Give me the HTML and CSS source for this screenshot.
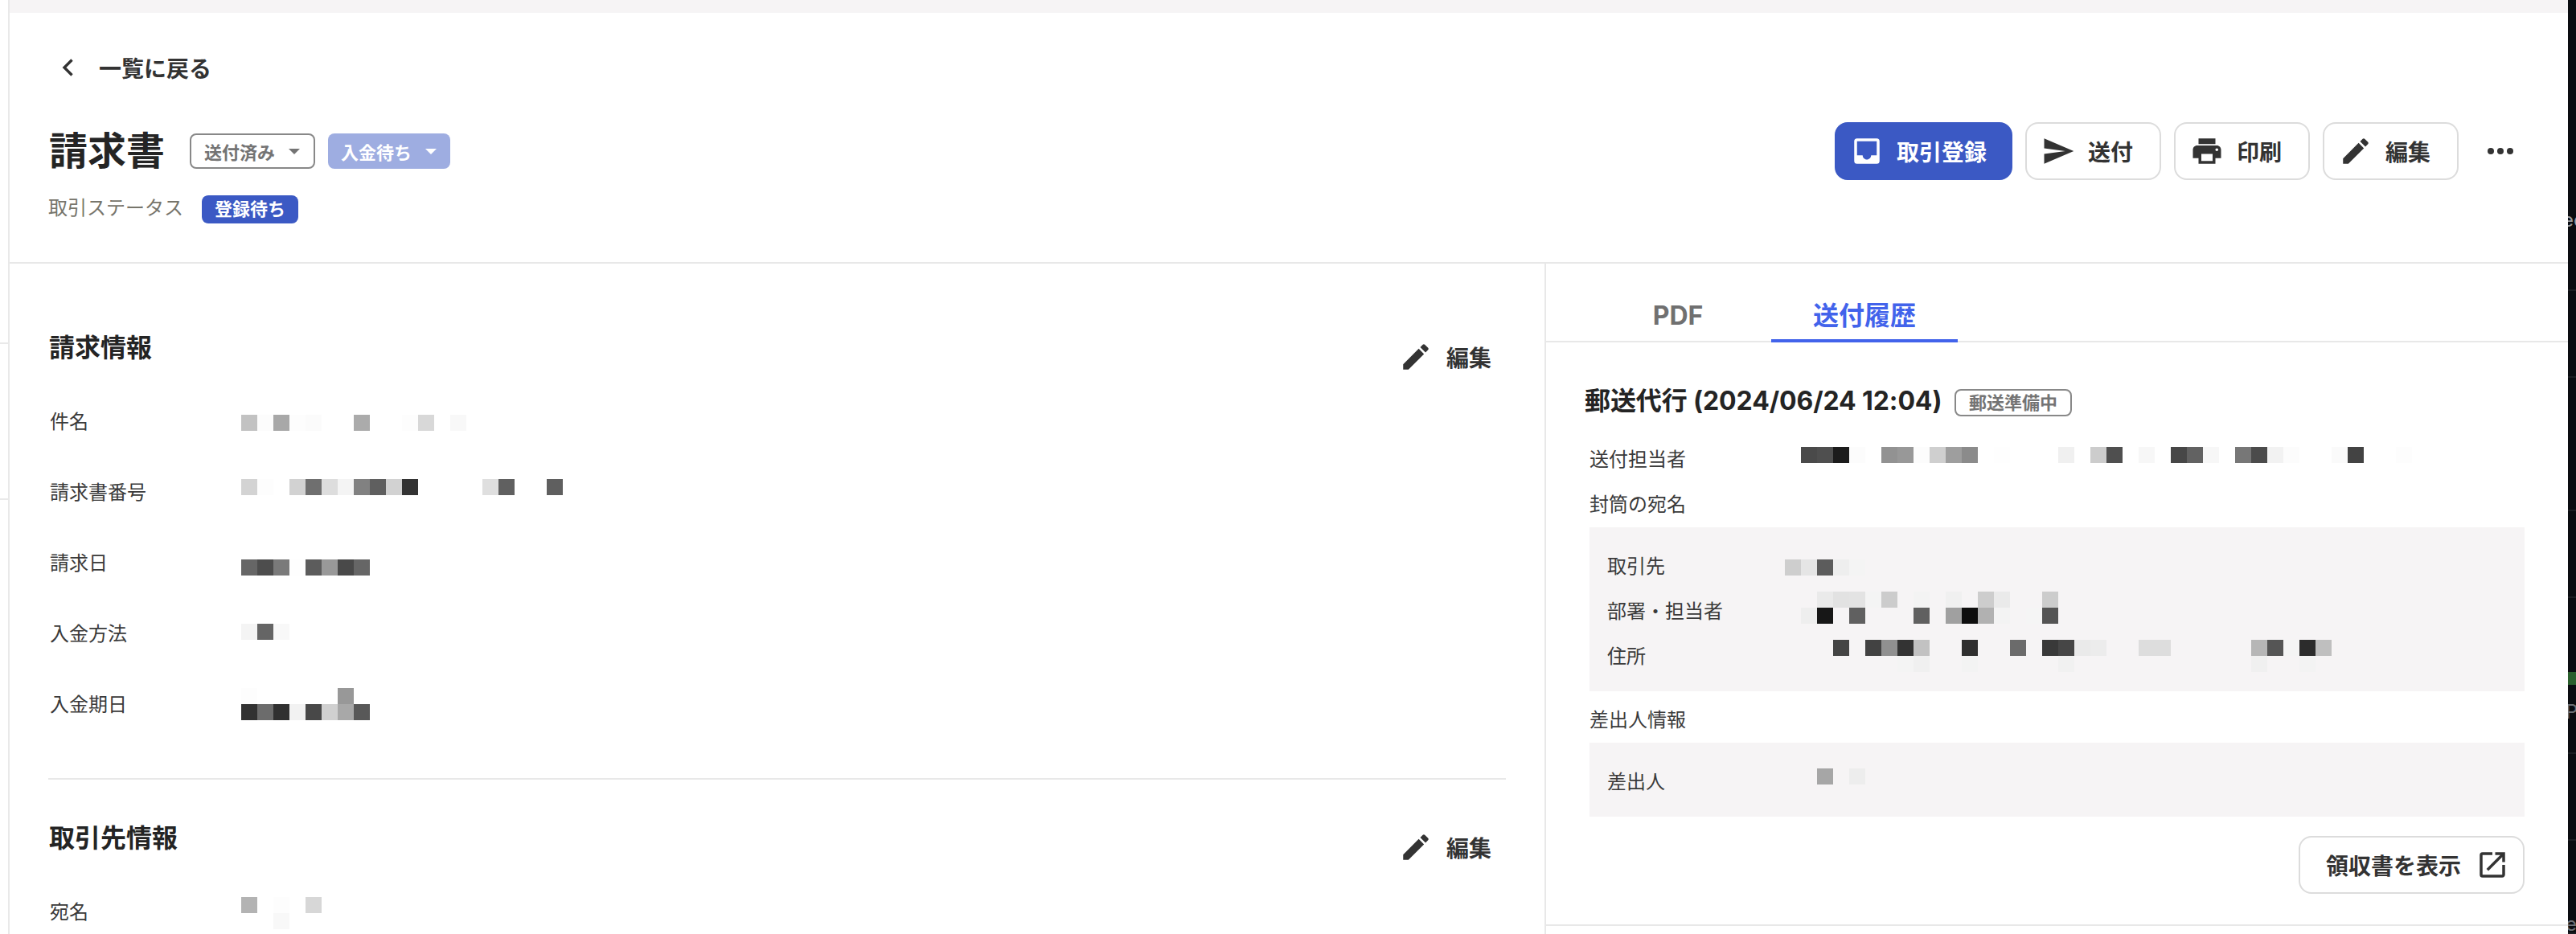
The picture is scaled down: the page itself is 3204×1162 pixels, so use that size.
FILE: index.html
```html
<!DOCTYPE html>
<html lang="ja">
<head>
  <meta charset="UTF-8">
  <meta name="viewport" content="width=device-width, initial-scale=1.0">
  <title>請求書</title>
  <link rel="stylesheet" href="styles.css">
</head>
<body>
  <svg width="0" height="0" class="defs">
    <symbol id="pencil" viewBox="0 0 24 24"><path d="M3 17.25V21h3.75L17.81 9.94l-3.75-3.75L3 17.25zM20.71 7.04a1 1 0 0 0 0-1.41l-2.34-2.34a1 1 0 0 0-1.41 0l-1.83 1.83 3.75 3.75 1.83-1.83z"/></symbol>
  </svg>

  <div class="screen">
    <div class="side">
      <div class="side-a"></div>
      <div class="side-b"></div>
    </div>

    <div class="app">
      <div class="topbar"></div>
      <header class="header">
        <a class="back">
          <svg width="16" height="22" viewBox="0 0 16 22"><path d="M13.500 1.500L4 11l9.500 9.500" fill="none" stroke="#333" stroke-width="3.400"/></svg>
          <span>一覧に戻る</span>
        </a>
        <div class="title-row">
          <h1>請求書</h1>
          <button class="chip chip-line">送付済み<i class="caret"></i></button>
          <button class="chip chip-fill">入金待ち<i class="caret"></i></button>
          <div class="actions">
            <button class="btn btn-primary">
              <svg class="icon" viewBox="0 0 24 24"><path d="M19 3H5a2 2 0 0 0-2 2v14a2 2 0 0 0 2 2h14a2 2 0 0 0 2-2V5a2 2 0 0 0-2-2zm0 12h-4c0 1.66-1.35 3-3 3s-3-1.34-3-3H5V5h14v10z"/></svg>
              取引登録
            </button>
            <button class="btn">
              <svg class="icon" viewBox="0 0 24 24"><path d="M2.01 21L23 12 2.01 3 2 10l15 2-15 2z"/></svg>
              送付
            </button>
            <button class="btn">
              <svg class="icon" viewBox="0 0 24 24"><path d="M19 8H5c-1.66 0-3 1.34-3 3v6h4v4h12v-4h4v-6c0-1.66-1.34-3-3-3zm-3 11H8v-5h8v5zm3-7c-.55 0-1-.45-1-1s.45-1 1-1 1 .45 1 1-.45 1-1 1zm-1-9H6v4h12V3z"/></svg>
              印刷
            </button>
            <button class="btn">
              <svg class="icon"><use href="#pencil"/></svg>
              編集
            </button>
            <div class="more"><i></i><i></i><i></i></div>
          </div>
        </div>
        <div class="status">
          <span class="status-label">取引ステータス</span>
          <span class="badge">登録待ち</span>
        </div>
      </header>

      <main class="main">
        <section class="left">
          <div class="block">
            <div class="block-head">
              <h2>請求情報</h2>
              <a class="edit"><svg class="icon"><use href="#pencil"/></svg>編集</a>
            </div>
            <div class="row"><span>件名</span><div class="mask m36" data-cells="c2 fc a8 fd fb - - ab - - fd d8 - f8"></div></div>
            <div class="row"><span>請求書番号</span><div class="mask m28" data-cells="d3 fd - d2 6f dd f4 81 5f d2 33 - - - - df 60 - - 5f"></div></div>
            <div class="row"><span>請求日</span><div class="mask m40" data-cells="66 4d 7a fe 5c 99 49 66"></div></div>
            <div class="row"><span>入金方法</span><div class="mask m32" data-cells="f4 65 f8"></div></div>
            <div class="row"><span>入金期日</span><div class="mask m24" data-cells="fd - - - - - 98 / 32 6c 30 f2 48 d0 a8 58"></div></div>
          </div>
          <div class="block">
            <div class="block-head">
              <h2>取引先情報</h2>
              <a class="edit"><svg class="icon"><use href="#pencil"/></svg>編集</a>
            </div>
            <div class="row"><span>宛名</span><div class="mask m26" data-cells="b3 - fd - d7 / - - f8"></div></div>
          </div>
        </section>

        <section class="right">
          <nav class="tabs">
            <a class="tab">PDF</a>
            <a class="tab active">送付履歴</a>
          </nav>
          <div class="history">
            <div class="history-head">
              <h3>郵送代行 (2024/06/24 12:04)</h3>
              <span class="tag">郵送準備中</span>
            </div>
            <div class="line line-owner"><span>送付担当者</span><div class="mask m13" data-cells="4a 4f 1c fc - 92 98 fc cf 9e 8b - fe - - - f0 - cc 4f - f7 - 47 62 f7 - 77 4b f2 fc - - fa 43 - - fd"></div></div>
            <div class="line"><span>封筒の宛名</span></div>
            <div class="panel">
              <div class="line"><span>取引先</span><div class="mask m20" data-cells="ce e5 5c ee f4"></div></div>
              <div class="line"><span>部署・担当者</span><div class="mask m4" data-cells="- - ea e2 e3 f4 cc - f3 - f0 - cd ea - - cc / - ee 17 - 60 - - - 60 - a0 0e b1 f3 - f5 54"></div></div>
              <div class="line"><span>住所</span><div class="mask m8" data-cells="- - - 44 - 42 90 33 c2 - - 2f - - 6b - 39 46 ea ec - - dd dd - - - - - b6 55 f4 2c bf / - - - - - - - f4 f0 - - f3 - - - - - f1 - - - - - - - - - - - f0 - - f3"></div></div>
            </div>
            <div class="line line-sender"><span>差出人情報</span></div>
            <div class="panel panel-sender">
              <div class="line"><span>差出人</span><div class="mask m12" data-cells="- - a6 - ed"></div></div>
            </div>
            <div class="receipt">
              <button class="btn btn-receipt">
                領収書を表示
                <svg class="icon" viewBox="0 0 24 24"><path d="M19 19H5V5h7V3H5a2 2 0 0 0-2 2v14a2 2 0 0 0 2 2h14c1.1 0 2-.9 2-2v-7h-2v7zM14 3v2h3.59l-9.83 9.83 1.41 1.41L19 6.41V10h2V3h-7z"/></svg>
              </button>
            </div>
          </div>
        </section>
      </main>
    </div>

    <!-- sliver of the window behind -->
    <div class="behind">
      <div class="b1"><span>ec</span></div>
      <div class="b2"></div>
      <div class="b3"></div>
      <div class="b4"></div>
      <div class="b5"><i class="green"></i><span>P</span></div>
      <div class="b6"></div>
      <div class="b7"><span>e</span></div>
    </div>
  </div>

  <script>
    // "/" starts a new line of cells, "-" is an empty cell, anything else is a grey level
    document.querySelectorAll('.mask').forEach(mask => {
      mask.dataset.cells.split('/').forEach(line => {
        const row = document.createElement('div');
        row.className = 'mask-row';
        line.trim().split(' ').forEach(v => {
          const cell = document.createElement('i');
          if (v !== '-') cell.style.background = '#' + v + v + v;
          row.appendChild(cell);
        });
        mask.appendChild(row);
      });
    });
  </script>
</body>
</html>
```
FILE: styles.css
```css
* {
  box-sizing: border-box;
}

body {
  margin: 0;
  background: #fff;
  color: #3a3a3a;
  font-family: Inter, "Noto Sans CJK JP", sans-serif;
  font-size: 24px;
  overflow: hidden;
}

h1, h2, h3 {
  margin: 0;
  color: #242424;
  font-weight: 700;
}

button {
  font-family: inherit;
  margin: 0;
}

.defs {
  position: absolute;
}

.screen {
  display: flex;
  width: 3204px;
  height: 1162px;
}

/* left edge */
.side {
  width: 12px;
  border-right: 2px solid #e9e9e9;
}

.side-a {
  height: 428px;
  border-bottom: 2px solid #e9e9e9;
}

.side-b {
  height: 194px;
  border-bottom: 2px solid #e9e9e9;
}

.app {
  width: 3182px;
  height: 1162px;
  overflow: hidden;
}

.topbar {
  height: 16px;
  background: #f6f4f5;
}

/* header */
.header {
  height: 312px;
  padding: 48px 48px 0 48px;
  border-bottom: 2px solid #e8e8e8;
}

.back {
  display: flex;
  align-items: center;
  gap: 31px;
  height: 40px;
  padding-left: 16px;
  color: #333;
  font-size: 28px;
  font-weight: 700;
}

.title-row {
  display: flex;
  align-items: center;
  height: 72px;
  margin-top: 48px;
}

.title-row h1 {
  width: 176px;
  padding-left: 1px;
  font-size: 48px;
  line-height: 72px;
}

.chip {
  display: flex;
  align-items: center;
  height: 44px;
  border-radius: 8px;
  font-size: 22px;
  font-weight: 700;
}

.chip-line {
  width: 156px;
  padding: 0 16px;
  border: 2px solid #888;
  background: #fff;
  color: #747474;
}

.chip-fill {
  width: 152px;
  margin-left: 16px;
  padding: 0 16px;
  border: 0;
  background: #9eade1;
  color: #fff;
}

.caret {
  margin-left: 17px;
  border: 7px solid transparent;
  border-top-color: currentColor;
  border-bottom: 0;
}

.actions {
  display: flex;
  align-items: center;
  gap: 16px;
  margin-left: auto;
}

.icon {
  width: 42px;
  height: 42px;
  fill: #333;
  flex: none;
}

.btn {
  display: flex;
  align-items: center;
  gap: 16px;
  width: 169px;
  height: 72px;
  padding: 0 0 0 18px;
  border: 2px solid #dcdcdc;
  border-radius: 16px;
  background: #fff;
  color: #333;
  font-size: 28px;
  font-weight: 700;
  white-space: nowrap;
}

.btn-primary {
  width: 221px;
  padding-left: 17px;
  border-color: #3b59c4;
  background: #3b59c4;
  color: #fff;
}

.btn-primary .icon {
  fill: #fff;
}

.more {
  display: flex;
  gap: 4px;
  width: 72px;
  padding-left: 20px;
}

.more i {
  width: 8px;
  height: 8px;
  border-radius: 50%;
  background: #333;
}

.status {
  display: flex;
  height: 35px;
  margin-top: 19px;
}

.status-label {
  width: 191px;
  color: #77756b;
  line-height: 31px;
}

.badge {
  width: 120px;
  height: 35px;
  border-radius: 8px;
  background: #3b59c4;
  color: #fff;
  font-size: 22px;
  font-weight: 700;
  line-height: 35px;
  text-align: center;
}

/* columns */
.main {
  display: flex;
  height: 834px;
}

.left {
  width: 1909px;
  padding: 0 48px;
}

.block + .block {
  margin-top: 48px;
  border-top: 2px solid #e8e8e8;
}

.block-head {
  display: flex;
  justify-content: space-between;
  height: 152px;
  padding-top: 84px;
}

.block + .block .block-head {
  height: 120px;
  padding-top: 52px;
}

.block-head h2 {
  padding-left: 1px;
  font-size: 32px;
  line-height: 41px;
}

.edit {
  display: flex;
  align-items: center;
  gap: 17px;
  height: 40px;
  margin-top: 12px;
  padding-right: 18px;
  color: #333;
  font-size: 28px;
  font-weight: 700;
}

.row {
  display: flex;
  height: 88px;
}

.row span {
  width: 240px;
  padding-left: 2px;
  line-height: 89px;
}

/* masked values */
.mask-row {
  display: flex;
  height: 20px;
}

.mask-row i {
  width: 20px;
  height: 20px;
}

.m4 { margin-top: 4px; }
.m8 { margin-top: 8px; }
.m12 { margin-top: 12px; }
.m13 { margin-top: 13px; }
.m20 { margin-top: 20px; }
.m24 { margin-top: 24px; }
.m26 { margin-top: 26px; }
.m28 { margin-top: 28px; }
.m32 { margin-top: 32px; }
.m36 { margin-top: 36px; }
.m40 { margin-top: 40px; }

.right {
  width: 1273px;
  border-left: 2px solid #e8e8e8;
}

.tabs {
  display: flex;
  height: 98px;
  padding-left: 48px;
  border-bottom: 2px solid #e8e8e8;
}

.tab {
  width: 232px;
  height: 98px;
  padding-top: 31px;
  color: #707070;
  font-size: 32px;
  font-weight: 700;
  line-height: 68px;
  text-align: center;
}

.active {
  border-bottom: 4px solid #4263eb;
  color: #4263eb;
}

.history {
  height: 726px;
  padding: 52px 54px 0 54px;
  border-bottom: 2px solid #e8e8e8;
}

.history-head {
  display: flex;
  height: 65px;
  margin-left: -6px;
}

.history-head h3 {
  width: 460px;
  font-size: 32px;
  letter-spacing: -0.1px;
  line-height: 41px;
  white-space: nowrap;
}

.tag {
  width: 146px;
  height: 34px;
  margin-top: 6px;
  border: 2px solid #888;
  border-radius: 8px;
  color: #747474;
  font-size: 22px;
  font-weight: 700;
  line-height: 30px;
  text-align: center;
}

.line {
  display: flex;
  height: 56px;
}

.line span {
  width: 221px;
  line-height: 57px;
}

.line-owner span {
  width: 263px;
}

.panel {
  height: 204px;
  margin-top: 1px;
  padding: 20px 22px;
  background: #f6f4f5;
}

.panel .line span {
  line-height: 58px;
}

.panel-sender {
  height: 92px;
}

.line-sender {
  height: 63px;
  padding-top: 7px;
}

.receipt {
  display: flex;
  justify-content: flex-end;
  margin-top: 24px;
}

.btn-receipt {
  width: 281px;
  padding-left: 32px;
  gap: 18px;
}

/* other window */
.behind {
  width: 10px;
  height: 1162px;
  overflow: hidden;
  background: #0a0c10;
  color: #9a9ca0;
}

.behind div {
  overflow: hidden;
  border-bottom: 2px solid #1c1e22;
}

.behind span {
  display: block;
  margin-left: -7px;
  line-height: 32px;
}

.b1 { height: 362px; padding-top: 258px; }
.b2 { height: 108px; }
.b3 { height: 166px; }
.b4 { height: 108px; }
.b5 { height: 194px; padding-top: 92px; color: #6d7076; }
.b6 { height: 108px; }
.b7 { height: 116px; padding-top: 88px; color: #6d7076; }

.b5 span,
.b7 span {
  margin-left: -3px;
}

.green {
  display: block;
  height: 16px;
  margin-bottom: 18px;
  background: #2b5f2d;
}
```
